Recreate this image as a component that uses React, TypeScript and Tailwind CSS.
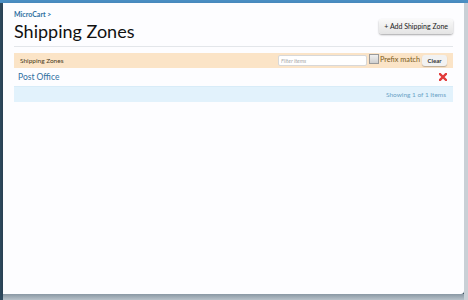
import React, { useState } from "react";

const font = { fontFamily: "Lato, 'DejaVu Sans', sans-serif" };

const App: React.FC = () => {
  const [filter, setFilter] = useState("");
  const [prefix, setPrefix] = useState(false);

  const zones = ["Post Office"];

  return (
    <div
      className="flex h-[300px] w-[468px] flex-col bg-[#2f4b60]"
      style={font}
    >
      <div className="h-[3px] bg-[#4b8fc4]" />
      <div className="flex flex-1 pl-[3px]">
        <div className="flex flex-1 flex-col">
          <div className="h-[291px] rounded-br-[3px] bg-[#fdfdff] px-[11px] pt-[7px] shadow-[0_2px_4px_rgba(0,0,0,0.3)]">
            <div className="text-[7px] leading-[9px] font-bold text-[#2f6f9f]">MicroCart &gt;</div>

            <div className="mt-[1px] flex items-start justify-between border-b border-[#e3e6ea] pb-[4px]">
              <h1 className="text-[18px] leading-[22px] text-[#111]">Shipping Zones</h1>
              <button className="-mt-[1px] rounded-[3px] bg-gradient-to-b from-[#fafafa] to-[#e4e4e4] px-[5px] py-[3px] text-[7px] leading-[9px] text-[#222] shadow-[0_1px_2px_rgba(0,0,0,0.35)]">
                + Add Shipping Zone
              </button>
            </div>

            <div className="mt-[6px] flex h-[15px] items-center justify-between bg-[#fbe4c7] pl-[6px] pr-[6px]">
              <span className="text-[6.5px] text-[#4a3a20]">Shipping Zones</span>
              <div className="flex items-center">
                <input
                  value={filter}
                  onChange={(e) => setFilter(e.target.value)}
                  placeholder="Filter items"
                  className="h-[11px] w-[89px] rounded-[2px] border border-[#d8d8d8] bg-white px-[2px] text-[5.5px] italic text-[#333] placeholder:text-[#aaa] outline-none"
                />
                <span
                  onClick={() => setPrefix(!prefix)}
                  className="mb-[4px] ml-[2px] h-[10px] w-[10px] border border-[#9a9a9a] bg-gradient-to-b from-[#f0f0f0] to-[#cfcfcf]"
                />
                <span className="ml-[1px] text-[7.3px] text-[#7a5a1a]">Prefix match</span>
                <button className="ml-[2px] h-[11px] rounded-[3px] bg-[#f2f2f2] px-[5.5px] text-[6px] font-bold text-[#333] shadow-[0_1px_1px_rgba(0,0,0,0.25)]">
                  Clear
                </button>
              </div>
            </div>

            {zones.map((z) => (
              <div key={z} className="flex h-[18px] items-center justify-between pl-[4px] pr-[6px]">
                <a className="text-[8.5px] text-[#2f6f9f]">{z}</a>
                <svg width="8" height="8" viewBox="0 0 8 8">
                  <path d="M1 1 L7 7 M7 1 L1 7" stroke="#e23a3a" strokeWidth="2.4" strokeLinecap="square" />
                </svg>
              </div>
            ))}

            <div className="flex h-[16px] items-center justify-end border-t border-[#d8ecf8] bg-[#e2f2fc] pr-[7px]">
              <span className="text-[6.5px] text-[#6aa2c6]">Showing 1 of 1 Items</span>
            </div>
          </div>
          <div className="flex-1 bg-gradient-to-b from-[#8a98a4] to-[#b8c2ca]" />
        </div>
        <div className="w-[4px] bg-[#c9d0d6]" />
      </div>
    </div>
  );
};

export default App;
